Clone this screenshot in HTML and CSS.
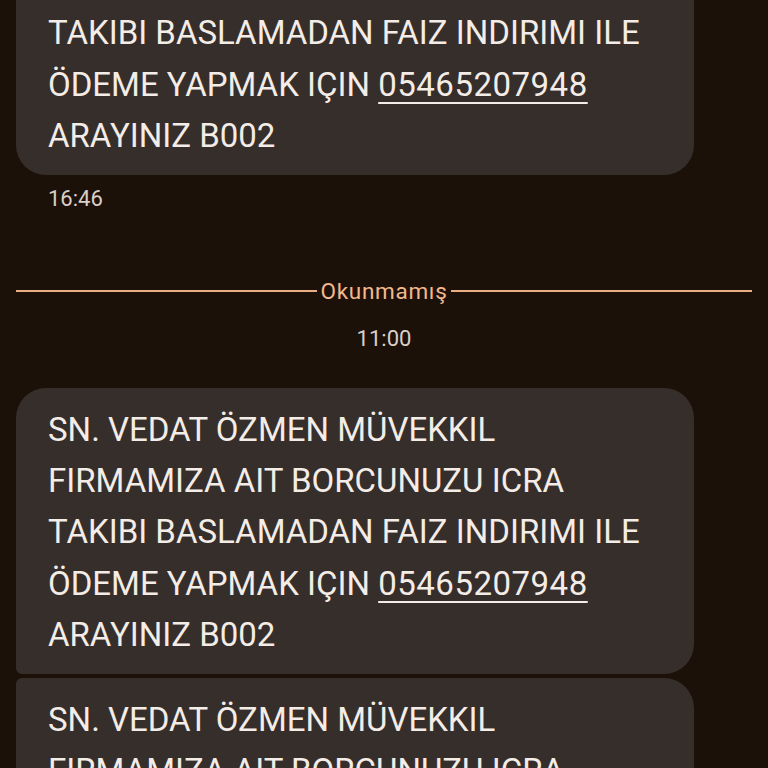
FILE: index.html
```html
<!DOCTYPE html>
<html lang="tr">
<head>
<meta charset="utf-8">
<title>Mesajlar</title>
<link rel="stylesheet" href="styles.css">
</head>
<body>
<main class="thread">
  <div class="group">
    <div class="bubble bubble-last">SN. VEDAT ÖZMEN MÜVEKKIL FIRMAMIZA AIT BORCUNUZU ICRA TAKIBI BASLAMADAN FAIZ INDIRIMI ILE ÖDEME YAPMAK IÇIN <span class="link">05465207948</span> ARAYINIZ B002</div>
  </div>
  <div class="stamp">16:46</div>

  <div class="divider">
    <span class="divider-line"></span>
    <span class="divider-label">Okunmamış</span>
    <span class="divider-line"></span>
  </div>

  <div class="time-center">11:00</div>

  <div class="group">
    <div class="bubble bubble-first">SN. VEDAT ÖZMEN MÜVEKKIL FIRMAMIZA AIT BORCUNUZU ICRA TAKIBI BASLAMADAN FAIZ INDIRIMI ILE ÖDEME YAPMAK IÇIN <span class="link">05465207948</span> ARAYINIZ B002</div>
    <div class="bubble bubble-last">SN. VEDAT ÖZMEN MÜVEKKIL FIRMAMIZA AIT BORCUNUZU ICRA TAKIBI BASLAMADAN FAIZ INDIRIMI ILE ÖDEME YAPMAK IÇIN <span class="link">05465207948</span> ARAYINIZ B002</div>
  </div>
</main>
</body>
</html>
```

FILE: styles.css
```css
html, body {
  margin: 0;
  padding: 0;
  background: #1c1109;
  height: 100%;
  overflow: hidden;
}

body {
  font-family: Roboto, "Noto Sans", "Liberation Sans", sans-serif;
  color: #f2ebe6;
}

.thread {
  display: flex;
  flex-direction: column;
  padding: 0 16px;
  margin-top: -111px;
}

.group {
  display: flex;
  flex-direction: column;
  gap: 4px;
}

.bubble {
  width: 678px;
  box-sizing: border-box;
  background: #362e2b;
  padding: 16px 32px 14px;
  font-size: 33px;
  line-height: 51.2px;
  color: #f3ece7;
  border-radius: 6px 30px 30px 6px;
}

.bubble-first {
  border-top-left-radius: 30px;
}

.bubble-last {
  border-bottom-left-radius: 30px;
}

.link {
  letter-spacing: 0.5px;
  text-decoration: underline;
  text-decoration-thickness: 2px;
  text-underline-offset: 6px;
}

.stamp {
  margin-top: 11px;
  padding-left: 32px;
  font-size: 22px;
  line-height: 26px;
  color: #dacfc7;
}

.divider {
  margin-top: 65px;
  display: flex;
  align-items: center;
  gap: 4px;
  height: 28px;
}

.divider-line {
  flex: 1;
  height: 2px;
  background: #e9ae82;
}

.divider-label {
  font-size: 22.5px;
  line-height: 28px;
  letter-spacing: 0.7px;
  color: #f3b88c;
}

.time-center {
  margin-top: 21px;
  margin-bottom: 36px;
  text-align: center;
  font-size: 22px;
  line-height: 26px;
  color: #dacfc7;
}
```
